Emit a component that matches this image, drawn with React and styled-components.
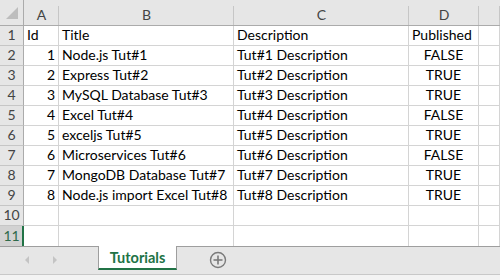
import React from "react";
import styled, { createGlobalStyle } from "styled-components";

const Global = createGlobalStyle`
  html, body { margin: 0; padding: 0; background: #fff; }
  body { font-family: Lato, "Open Sans", sans-serif; overflow: hidden; }
`;

const Page = styled.div`
  width: 500px;
  height: 280px;
  display: flex;
  flex-direction: column;
  background: #fff;
`;

const Grid = styled.div`
  display: grid;
  grid-template-columns: 24px 35px 175px 175px 70px 1fr;
  grid-template-rows: 26px repeat(11, 20px);
`;

const Corner = styled.div`
  background: #e6e6e6;
  border-right: 1px solid #ababab;
  border-bottom: 1px solid #ababab;
  display: flex;
  align-items: center;
  justify-content: center;
  box-sizing: border-box;
`;

const ColHead = styled.div`
  box-sizing: border-box;
  background: linear-gradient(#c6c6c6, #c6c6c6) right 0 bottom 0 / 1px 19px no-repeat, #e6e6e6;
  border-bottom: 1px solid #ababab;
  display: flex;
  align-items: flex-end;
  justify-content: center;
  padding-bottom: 3px;
  font-size: 14px;
  color: #444;
  line-height: 1;
`;

const RowHead = styled.div`
  box-sizing: border-box;
  background: ${(p) => (p.$active ? "#d2d2d2" : "#e6e6e6")};
  border-right: ${(p) => (p.$active ? "2px solid #217346" : "1px solid #ababab")};
  border-bottom: ${(p) => (p.$last ? "none" : "1px solid #c6c6c6")};
  display: flex;
  align-items: flex-end;
  justify-content: center;
  padding-bottom: 3px;
  padding-left: ${(p) => (p.$active ? "1px" : "0")};
  font-size: 14px;
  line-height: 1;
  color: ${(p) => (p.$active ? "#2f6a4b" : "#444")};
`;

const Cell = styled.div`
  box-sizing: border-box;
  border-right: 1px solid #d4d4d4;
  border-bottom: ${(p) => (p.$last ? "none" : "1px solid #d4d4d4")};
  display: flex;
  align-items: flex-end;
  justify-content: ${(p) =>
    p.$align === "right" ? "flex-end" : p.$align === "center" ? "center" : "flex-start"};
  padding: 0 3px 3px 3px;
  font-size: 14px;
  line-height: 1;
  color: #000;
  white-space: nowrap;
  overflow: visible;
`;

const TabBar = styled.div`
  height: 27px;
  background: #e6e6e6;
  border-top: 1px solid #9e9e9e;
  border-bottom: 1px solid #c8c8c8;
  display: flex;
  align-items: flex-start;
  box-sizing: content-box;
`;

const Nav = styled.div`
  width: 98px;
  display: flex;
  align-items: center;
  padding-left: 23px;
  gap: 20px;
  height: 26px;
  box-sizing: border-box;
`;

const Arrow = styled.svg`
  width: 8px;
  height: 10px;
`;

const Tab = styled.div`
  margin-top: -1px;
  width: 79px;
  height: 24px;
  box-sizing: border-box;
  background: #fff;
  border-left: 1px solid #9e9e9e;
  border-right: 1px solid #9e9e9e;
  border-bottom: 2px solid #217346;
  display: flex;
  align-items: center;
  justify-content: center;
  font-weight: 700;
  font-size: 14.5px;
  color: #217346;
`;

const AddBtn = styled.div`
  margin-left: 32px;
  height: 26px;
  display: flex;
  align-items: center;
`;

const Footer = styled.div`
  flex: 1;
  background: #f3f3f3;
`;

const data = [
  [1, "Node.js Tut#1", "Tut#1 Description", "FALSE"],
  [2, "Express Tut#2", "Tut#2 Description", "TRUE"],
  [3, "MySQL Database Tut#3", "Tut#3 Description", "TRUE"],
  [4, "Excel Tut#4", "Tut#4 Description", "FALSE"],
  [5, "exceljs Tut#5", "Tut#5 Description", "TRUE"],
  [6, "Microservices Tut#6", "Tut#6 Description", "FALSE"],
  [7, "MongoDB Database Tut#7", "Tut#7 Description", "TRUE"],
  [8, "Node.js import Excel Tut#8", "Tut#8 Description", "TRUE"],
];

export default function App() {
  const rows = [
    ["Id", "Title", "Description", "Published"],
    ...data,
    ["", "", "", ""],
    ["", "", "", ""],
  ];
  return (
    <Page>
      <Global />
      <Grid>
        <Corner>
          <svg width="14" height="14" viewBox="0 0 14 14">
            <polygon points="13,1 13,13 1,13" fill="#bdbdbd" />
          </svg>
        </Corner>
        {["A", "B", "C", "D", ""].map((c, i) => (
          <ColHead key={i}>{c}</ColHead>
        ))}
        {rows.map((r, i) => {
          const last = i === rows.length - 1;
          const header = i === 0;
          return (
            <React.Fragment key={i}>
              <RowHead $active={last} $last={last}>{i + 1}</RowHead>
              <Cell $last={last} $align={header ? "left" : "right"}>{r[0]}</Cell>
              <Cell $last={last}>{r[1]}</Cell>
              <Cell $last={last}>{r[2]}</Cell>
              <Cell $last={last} $align={header ? "left" : "center"}>{r[3]}</Cell>
              <Cell $last={last} />
            </React.Fragment>
          );
        })}
      </Grid>
      <TabBar>
        <Nav>
          <Arrow viewBox="0 0 8 10">
            <polygon points="6,1 6,9 2,5" fill="#c4c4c4" />
          </Arrow>
          <Arrow viewBox="0 0 8 10">
            <polygon points="2,1 2,9 6,5" fill="#c4c4c4" />
          </Arrow>
        </Nav>
        <Tab>Tutorials</Tab>
        <AddBtn>
          <svg width="18" height="18" viewBox="0 0 18 18">
            <circle cx="9" cy="9" r="7.5" fill="none" stroke="#7a7a7a" strokeWidth="1.4" />
            <line x1="9" y1="4.5" x2="9" y2="13.5" stroke="#7a7a7a" strokeWidth="1.6" />
            <line x1="4.5" y1="9" x2="13.5" y2="9" stroke="#7a7a7a" strokeWidth="1.6" />
          </svg>
        </AddBtn>
      </TabBar>
      <Footer />
    </Page>
  );
}
